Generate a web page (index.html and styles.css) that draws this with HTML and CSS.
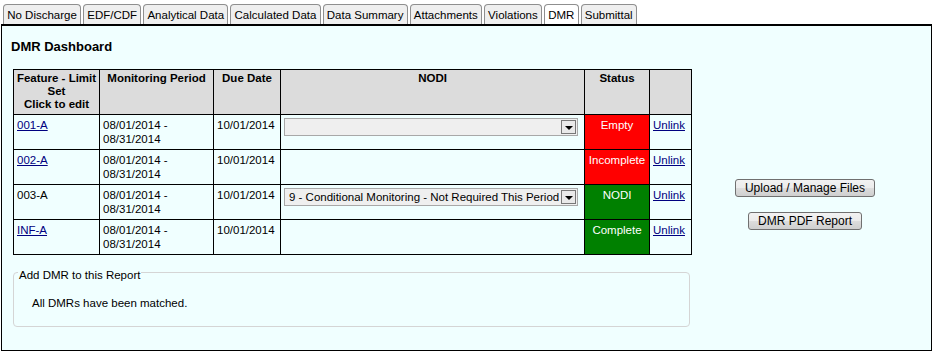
FILE: index.html
```html
<!DOCTYPE html>
<html lang="en">
<head>
<meta charset="utf-8">
<title>DMR Dashboard</title>
<link rel="stylesheet" href="styles.css">
</head>
<body>
<div class="tabs">
  <div class="tab">No Discharge</div>
  <div class="tab">EDF/CDF</div>
  <div class="tab">Analytical Data</div>
  <div class="tab">Calculated Data</div>
  <div class="tab">Data Summary</div>
  <div class="tab">Attachments</div>
  <div class="tab">Violations</div>
  <div class="tab active">DMR</div>
  <div class="tab">Submittal</div>
</div>
<div class="panel">
  <h2 class="title">DMR Dashboard</h2>
  <div class="body">
    <div class="main">
      <table class="dmr">
        <colgroup>
          <col class="c1"><col class="c2"><col class="c3"><col class="c4"><col class="c5"><col class="c6">
        </colgroup>
        <thead>
          <tr>
            <th>Feature - Limit Set<br>Click to edit</th>
            <th>Monitoring Period</th>
            <th>Due Date</th>
            <th>NODI</th>
            <th>Status</th>
            <th></th>
          </tr>
        </thead>
        <tbody>
          <tr>
            <td><a href="#">001-A</a></td>
            <td>08/01/2014 - 08/31/2014</td>
            <td>10/01/2014</td>
            <td><div class="sel"><span class="sel-text"></span><span class="arrow"><span class="tri"></span></span></div></td>
            <td class="status empty">Empty</td>
            <td><a href="#">Unlink</a></td>
          </tr>
          <tr>
            <td><a href="#">002-A</a></td>
            <td>08/01/2014 - 08/31/2014</td>
            <td>10/01/2014</td>
            <td></td>
            <td class="status empty">Incomplete</td>
            <td><a href="#">Unlink</a></td>
          </tr>
          <tr>
            <td>003-A</td>
            <td>08/01/2014 - 08/31/2014</td>
            <td>10/01/2014</td>
            <td><div class="sel"><span class="sel-text">9 - Conditional Monitoring - Not Required This Period</span><span class="arrow"><span class="tri"></span></span></div></td>
            <td class="status ok">NODI</td>
            <td><a href="#">Unlink</a></td>
          </tr>
          <tr>
            <td><a href="#">INF-A</a></td>
            <td>08/01/2014 - 08/31/2014</td>
            <td>10/01/2014</td>
            <td></td>
            <td class="status ok">Complete</td>
            <td><a href="#">Unlink</a></td>
          </tr>
        </tbody>
      </table>
      <fieldset class="add">
        <legend>Add DMR to this Report</legend>
        <p>All DMRs have been matched.</p>
      </fieldset>
    </div>
    <div class="actions">
      <button class="btn" type="button">Upload / Manage Files</button>
      <button class="btn" type="button">DMR PDF Report</button>
    </div>
  </div>
</div>
</body>
</html>
```
FILE: styles.css
```css
html, body {
  margin: 0;
  background: #ffffff;
}
body {
  font-family: "Liberation Sans", Arial, sans-serif;
  font-size: 11.5px;
  color: #000;
}

/* tabs */
.tabs {
  display: flex;
  gap: 2px;
  padding: 4px 0 0 3px;
}
.tab {
  box-sizing: border-box;
  height: 20px;
  padding: 3px 3.2px 0;
  line-height: 14px;
  border: 1px solid #8f8f8f;
  border-bottom: none;
  border-radius: 4px 4px 0 0;
  background: #efefef;
  white-space: nowrap;
}
.tab.active {
  background: #ffffff;
}

/* panel */
.panel {
  margin: 0 1px;
  border: 1px solid #000;
  border-top-width: 2px;
  background: #f0ffff;
  padding: 0 9px 23px;
}
.title {
  margin: 13px 0 15px;
  font-size: 13px;
  line-height: 15px;
  font-weight: bold;
}
.body {
  display: flex;
  margin-left: 2px;
}
.main {
  width: 678px;
}

/* table */
.dmr {
  border-collapse: collapse;
  table-layout: fixed;
  width: 678px;
}
.c1 { width: 86px; }
.c2 { width: 114px; }
.c3 { width: 67px; }
.c4 { width: 304px; }
.c5 { width: 65px; }
.c6 { width: 42px; }
.dmr th, .dmr td {
  border: 1px solid #000;
  vertical-align: top;
  line-height: 14px;
}
.dmr th {
  background: #dcdcdc;
  font-weight: bold;
  text-align: center;
  padding: 2px 1px;
  line-height: 13px;
  height: 40px;
}
.dmr td {
  padding: 3px;
  height: 28px;
  text-align: left;
}
.dmr a {
  color: #000080;
  text-decoration: underline;
}
.dmr td.status {
  text-align: center;
  color: #ffffff;
}
.status.empty { background: #ff0000; }
.status.ok { background: #008000; }

/* fake select */
.sel {
  box-sizing: border-box;
  width: 294px;
  height: 18px;
  display: flex;
  align-items: center;
  justify-content: space-between;
  border: 1px solid #a8a8a8;
  background: #efefef;
  padding-left: 4px;
}
.sel-text {
  white-space: nowrap;
  overflow: hidden;
  line-height: 14px;
}
.arrow {
  box-sizing: border-box;
  flex: none;
  width: 15px;
  height: 14px;
  margin-right: 1px;
  border: 1px solid #777;
  background: #e9e9e9;
  display: flex;
  align-items: center;
  justify-content: center;
}
.tri {
  width: 0;
  height: 0;
  border-left: 4px solid transparent;
  border-right: 4px solid transparent;
  border-top: 4px solid #000;
  margin-top: 1px;
}

/* fieldset */
.add {
  margin: 7px 1px 0 0;
  padding: 0 4px 16px;
  border: 1px solid #d5d5d5;
  border-radius: 4px;
  min-width: 0;
}
.add legend {
  padding: 6px 1px 0;
  line-height: 14px;
}
.add p {
  margin: 14px 0 0 14px;
  line-height: 14px;
}

/* actions */
.actions {
  flex: 1;
  display: flex;
  flex-direction: column;
  align-items: center;
  justify-content: center;
  gap: 15px;
  padding: 12px 3px 0 0;
}
.btn {
  box-sizing: border-box;
  height: 18px;
  padding: 0 9px;
  font-family: "Liberation Sans", Arial, sans-serif;
  font-size: 12px;
  line-height: 14px;
  color: #000;
  border: 1px solid #707070;
  border-radius: 3px;
  background: linear-gradient(#f2f2f2 0%, #ebebeb 50%, #dddddd 50%, #cfcfcf 100%);
}
```
